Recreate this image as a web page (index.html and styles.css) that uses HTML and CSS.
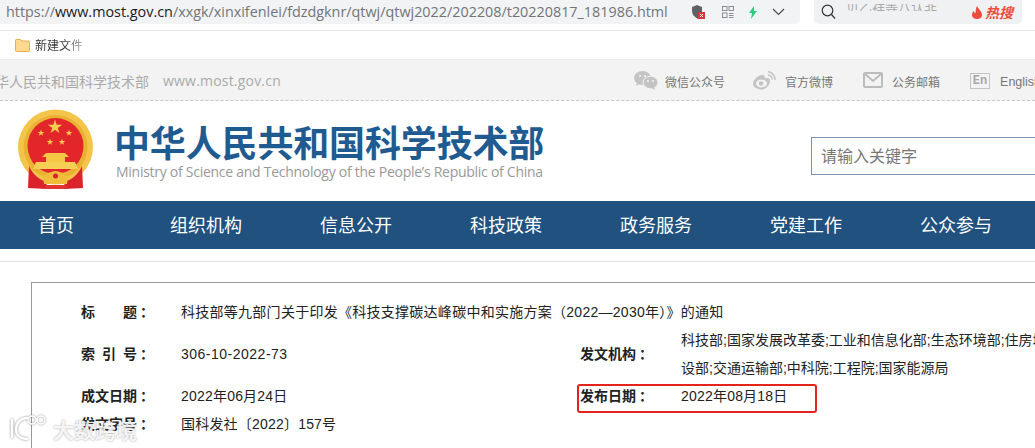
FILE: index.html
```html
<!DOCTYPE html>
<html lang="zh-CN">
<head>
<meta charset="utf-8">
<title>中华人民共和国科学技术部</title>
<link rel="stylesheet" href="styles.css">
</head>
<body>
<div class="page">
  <div class="browser-bar">
    <div class="address">
      <div class="url"><span class="dim">https://</span><span class="host">www.most.gov.cn</span><span class="dim">/xxgk/xinxifenlei/fdzdgknr/qtwj/qtwj2022/202208/t20220817_181986.html</span></div>
      <svg class="ic-shield" width="14" height="16" viewBox="0 0 14 16"><path d="M6 1 L11 3 V8 H7 V15 C3 13 1 10 1 7 V3 Z" fill="#5f6368"/><rect x="7" y="8" width="7" height="7" fill="#d13a35"/><path d="M9 10 L12 13 M12 10 L9 13" stroke="#fff" stroke-width="1"/></svg>
      <svg class="ic-qr" width="12" height="12" viewBox="0 0 12 12" fill="none" stroke="#8a8d91"><rect x=".5" y=".5" width="4.5" height="4"/><rect x="7" y=".5" width="4.5" height="4"/><rect x=".5" y="7" width="4.5" height="4.5"/><path d="M7 7.5H11.5M7 9.5H11.5M7 11.5H11.5"/></svg>
      <svg class="ic-bolt" width="10" height="13" viewBox="0 0 10 13"><path d="M6 0 L1 7 H4 L3 13 L9 5 H6 Z" fill="#2fc97f"/></svg>
      <svg class="ic-chev" width="13" height="8" viewBox="0 0 13 8" fill="none" stroke="#4a4d50" stroke-width="1.2"><path d="M1 1 L6.5 6.5 L12 1"/></svg>
    </div>
    <div class="search-mini">
      <svg width="15" height="16" viewBox="0 0 15 16" fill="none" stroke="#333" stroke-width="1.2"><circle cx="6.5" cy="6.5" r="5.3"/><path d="M10.5 10.5 L14 14.5"/></svg>
      <div class="clip"><span>贝乙祥等八认非</span></div>
      <div class="hot"><svg width="12" height="13" viewBox="0 0 12 13"><path d="M6 0 C7 3 11 5 11 9 C11 11.500 9 13 6 13 C3 13 1 11.500 1 9 C1 7 2 5.500 3 5 C3 6.500 4 7 4.500 7 C5 5 4.500 2 6 0 Z" fill="#ef4b3f"/></svg><b>热搜</b></div>
    </div>
  </div>
  <div class="bookmarks">
    <svg width="15" height="13" viewBox="0 0 15 13"><path d="M.5 1.500 Q.5 .5 1.500 .5 H5.500 L7 2 H13.500 Q14.500 2 14.500 3 V11.500 Q14.500 12.500 13.500 12.500 H1.500 Q.5 12.500 .5 11.500 Z" fill="#fcd98f" stroke="#e9ae4d"/></svg>
    <span class="bm-text">新建文件</span>
  </div>
  <div class="topbar">
    <div class="site"><span class="site-cn">华人民共和国科学技术部</span><span class="site-url">www.most.gov.cn</span></div>
    <div class="links">
      <a class="link link-wx"><svg width="24" height="19" viewBox="0 0 24 19" fill="#c4c4c4"><ellipse cx="8.500" cy="7" rx="8.500" ry="7"/><path d="M3 11 L2 15 L7 12 Z"/><ellipse cx="16.500" cy="11.500" rx="7.500" ry="6.300" stroke="#f3f3f3"/><path d="M20 16 L21 19 L17 17 Z"/><circle cx="6" cy="5" r="1.100" fill="#f3f3f3"/><circle cx="11" cy="5" r="1.100" fill="#f3f3f3"/><circle cx="14" cy="10" r="1" fill="#f3f3f3"/><circle cx="19" cy="10" r="1" fill="#f3f3f3"/></svg><span class="lt">微信公众号</span></a>
      <a class="link link-wb"><svg width="23" height="19" viewBox="0 0 23 19" fill="none"><path d="M9 18.500 C4 18.500 0 16 0 12.500 C0 8.500 6 3.500 10 4 C12 4.500 12 6.500 11.500 7.500 C14 6.500 17 7 17 9.500 C17 14 13 18.500 9 18.500 Z" fill="#c4c4c4"/><ellipse cx="8.500" cy="12.500" rx="5.500" ry="4" fill="#f3f3f3"/><circle cx="8" cy="12.500" r="2.300" fill="#c4c4c4"/><path d="M15 4 A4 4 0 0 1 19 8.500 M15 .8 A7.500 7.500 0 0 1 22 9" stroke="#c4c4c4" stroke-width="1.500"/></svg><span class="lt">官方微博</span></a>
      <a class="link link-mail"><svg width="20" height="16" viewBox="0 0 20 16" fill="none" stroke="#bcbcbc" stroke-width="2"><rect x="1" y="1" width="18" height="14" rx="1"/><path d="M2 2 L10 9 L18 2"/></svg><span class="lt">公务邮箱</span></a>
      <a class="link link-en"><span class="en-badge">En</span><span class="lt">English</span></a>
    </div>
  </div>
  <header class="masthead">
    <svg class="emblem" width="80" height="84" viewBox="16 107 80 84">
      <defs><polygon id="star" points="0,-1 .225,-.31 .95,-.31 .363,.118 .588,.809 0,.382 -.588,.809 -.363,.118 -.95,-.31 -.225,-.31" fill="#f7cf4f"/></defs>
      <circle cx="55.500" cy="146" r="37.500" fill="#f4c54a"/>
      <circle cx="55.500" cy="146" r="32" fill="#eab233"/>
      <circle cx="55.500" cy="145" r="28" fill="#e3262a"/>
      <use href="#star" transform="translate(55 126) scale(7.500)"/>
      <use href="#star" transform="translate(41 132) scale(3.500)"/>
      <use href="#star" transform="translate(69 132) scale(3.500)"/>
      <use href="#star" transform="translate(50 141) scale(3.500)"/>
      <use href="#star" transform="translate(62 141) scale(3.500)"/>
      <path d="M46 152 H65 L69 156 H42 Z" fill="#f4c843"/>
      <rect x="46" y="156" width="19" height="5" fill="#f4c843"/>
      <path d="M36 161 H75 L78 168 H33 Z" fill="#f6cf55"/>
      <path d="M29 165 C33 174 40 179 47 181 L46 188 L28 187 Z" fill="#d9242b"/>
      <path d="M82 165 C78 174 71 179 64 181 L65 188 L83 187 Z" fill="#d9242b"/>
      <path d="M43 176 C47 172 52 170 55.500 170 C59 170 64 172 68 176 L67 183 H44 Z" fill="#f0bd3a"/>
      <circle cx="55.500" cy="175" r="2.500" fill="#d9242b"/>
      <path d="M46 184 H65 L67 188 H44 Z" fill="#e23530"/>
    </svg>
    <div class="brand">
      <h1>中华人民共和国科学技术部</h1>
      <p>Ministry of Science and Technology of the People’s Republic of China</p>
    </div>
    <div class="searchbox">请输入关键字</div>
  </header>
  <nav class="nav">
    <a>首页</a><a>组织机构</a><a>信息公开</a><a>科技政策</a><a>政务服务</a><a>党建工作</a><a>公众参与</a>
  </nav>
  <div class="rule"></div>
  <section class="doc">
    <div class="label"><span class="lj">标题</span>：</div>
    <div class="value wide v-title">科技部等九部门关于印发《科技支撑碳达峰碳中和实施方案（2022—2030年）》的通知</div>
    <div class="label"><span class="lj">索引号</span>：</div>
    <div class="value v-code">306-10-2022-73</div>
    <div class="label"><span class="lj">发文机构</span>：</div>
    <div class="value v-right lines"><span>科技部;国家发展改革委;工业和信息化部;生态环境部;住房城乡建</span><span>设部;交通运输部;中科院;工程院;国家能源局</span></div>
    <div class="label"><span class="lj">成文日期</span>：</div>
    <div class="value">2022年06月24日</div>
    <div class="label"><span class="lj">发布日期</span>：</div>
    <div class="value v-right">2022年08月18日</div>
    <div class="label"><span class="lj">发文字号</span>：</div>
    <div class="value wide">国科发社〔2022〕157号</div>
  </section>
  <div class="redbox"></div>
  <div class="watermark">
    <svg width="44" height="30" viewBox="0 0 44 30" fill="none" stroke="#fff" stroke-width="2.500"><path d="M4 5 V24"/><path d="M20 4 C11 4 8 10 8 15 C8 21 12 25 20 25"/><circle cx="24" cy="6" r="4" stroke-width="1.500"/><circle cx="33" cy="6" r="4" stroke-width="1.500"/></svg>
    <span>大数跨境</span>
  </div>
</div>
</body>
</html>
```
FILE: styles.css
```css
* { box-sizing: border-box; }
html, body { margin: 0; padding: 0; background: #fff; }
.page {
  position: relative;
  width: 1035px;
  height: 448px;
  overflow: hidden;
  font-family: "Liberation Sans", "Noto Sans CJK SC", sans-serif;
  color: #222;
}
.browser-bar {
  display: flex;
  height: 31px;
  padding-bottom: 6px;
  gap: 14px;
  border-bottom: 1px solid #e8e8e8;
}
.address {
  width: 800px;
  display: flex;
  align-items: center;
  background: #f2f3f5;
  border-radius: 0 0 5px 0;
  padding-left: 6px;
}
.url {
  width: 685px;
  flex: none;
  font: 14.370px/24px "Open Sans", "Noto Sans", sans-serif;
  white-space: nowrap;
  overflow: hidden;
}
.dim { color: #70757a; }
.host { color: #1b1b1b; }
.ic-qr { margin-left: 17px; }
.ic-bolt { margin-left: 14px; }
.ic-chev { margin-left: 14px; }
.search-mini {
  width: 208px;
  display: flex;
  align-items: center;
  background: #f0f1f3;
  border-radius: 0 0 5px 5px;
  padding-left: 7px;
}
.clip {
  width: 125px;
  height: 7px;
  margin: -10px 0 0 10px;
  overflow: hidden;
  font: 13px/13px "Noto Sans CJK SC", sans-serif;
  color: #aaa;
}
.clip span { display: block; margin-top: -4px; white-space: nowrap; }
.hot { display: flex; align-items: center; gap: 2px; color: #ee4b3e; font: italic 14px/16px "Noto Sans CJK SC", sans-serif; }
.bookmarks {
  display: flex;
  align-items: center;
  height: 29px;
  padding-left: 15px;
  border-bottom: 1px solid #ececec;
  gap: 5px;
}
.bm-text {
  font: 12px/16px "Noto Sans CJK SC", sans-serif;
  background: linear-gradient(90deg, #333 60%, #bbb 100%);
  background-clip: text;
  -webkit-background-clip: text;
  color: transparent;
}
.topbar {
  display: flex;
  align-items: center;
  height: 41px;
  background: #f3f3f3;
  border-bottom: 1px dashed #c9c9c9;
  white-space: nowrap;
}
.site {
  display: flex;
  align-items: center;
  margin: 1px 0 0 -5px;
  width: 639px;
  flex: none;
  color: #aaa;
}
.site-cn { font: 14px/20px "Noto Sans CJK SC", sans-serif; }
.site-url { margin-left: 14px; font: 14px/20px "Open Sans", sans-serif; letter-spacing: 0.2px; }
.links { display: flex; align-items: center; flex: none; font: 12px/18px "Noto Sans CJK SC", sans-serif; color: #777; }
.link { display: flex; align-items: center; }
.lt { margin-top: 3px; }
.link-wx svg { margin-right: 7px; }
.link-wb { margin-left: 28px; }
.link-wb svg { margin-right: 9px; }
.link-mail { margin-left: 30px; }
.link-mail svg { margin-right: 9px; }
.link-en { margin-left: 30px; font-family: "Liberation Sans", sans-serif; font-size: 12.500px; }
.en-badge {
  width: 20px;
  height: 16px;
  margin: 2px 10px 0 0;
  border: 1px solid #c4c4c4;
  color: #a8a8a8;
  font: 700 12px/14px "Liberation Mono", monospace;
  text-align: center;
}
.masthead {
  display: flex;
  align-items: flex-start;
  height: 100px;
  background: #fff;
}
.emblem { flex: none; margin: 7px 0 0 16px; }
.brand { flex: none; width: 697px; margin: 19px 0 0 18px; }
.brand h1 {
  margin: 0;
  font: 700 36px/42px "Noto Sans CJK SC", sans-serif;
  letter-spacing: -0.15px;
  color: #1f5b91;
  white-space: nowrap;
}
.brand p {
  margin: 1px 0 0 2px;
  font: 14px/18px "Open Sans", sans-serif;
  color: #999;
  letter-spacing: -0.27px;
  white-space: nowrap;
}
.searchbox {
  flex: none;
  width: 300px;
  height: 38px;
  margin-top: 36px;
  padding-left: 9px;
  border: 1px solid #7a93ab;
  font: 16px/35px "Noto Sans CJK SC", sans-serif;
  color: #777;
}
.nav {
  display: flex;
  height: 48px;
  background: #20517f;
  overflow: hidden;
}
.nav a {
  flex: none;
  width: 150px;
  color: #fff;
  text-align: center;
  font: 18px/47px "Noto Sans CJK SC", sans-serif;
}
.nav a:first-child { margin-left: -19px; }
.rule { height: 1px; margin-top: 12px; background: #dedede; }
.doc {
  display: grid;
  grid-template-columns: 100px 399px 100px 500px;
  grid-auto-rows: minmax(28px, auto);
  align-items: center;
  width: 1150px;
  height: 300px;
  margin: 20px 0 0 31px;
  padding: 15px 0 0 49px;
  border: 1px solid #999;
  align-content: start;
  font-size: 14px;
  line-height: 28px;
}
.label { font-weight: 700; color: #222; white-space: nowrap; display: flex; }
.lj { display: block; width: 56px; margin-right: 3px; text-align-last: justify; }
.value { color: #222; white-space: nowrap; letter-spacing: 0.2px; }
.v-right { margin-left: 1px; }
.wide { grid-column: 2 / 5; }
.v-title { letter-spacing: 0.27px; }
.v-code { letter-spacing: 0.5px; }
.lines span { display: block; letter-spacing: 0; }
.redbox {
  position: absolute;
  left: 577px;
  top: 384px;
  width: 240px;
  height: 29px;
  border: 2.500px solid #e3231c;
  border-radius: 3px;
}
.watermark {
  position: absolute;
  left: 8px;
  top: 414px;
  display: flex;
  align-items: center;
  gap: 1px;
  color: rgba(255, 255, 255, .9);
  font: 700 21px/30px "Noto Sans CJK SC", sans-serif;
  text-shadow: 0 0 2px rgba(90, 90, 90, .6);
}
.watermark svg { filter: drop-shadow(0 0 1px rgba(90, 90, 90, .7)); }
```
